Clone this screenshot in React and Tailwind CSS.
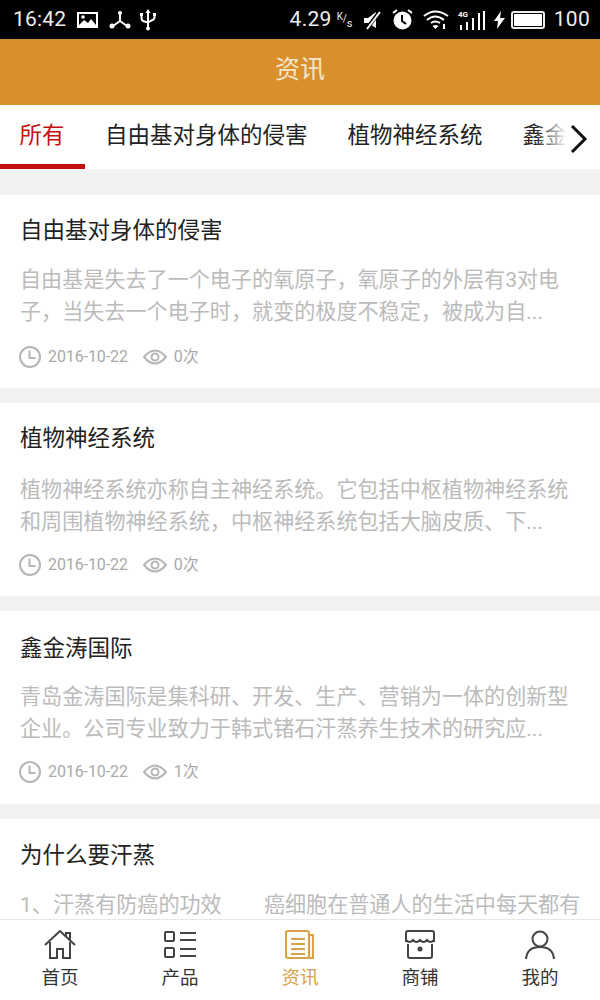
const cards = [
  { title: "自由基对身体的侵害", head: "h-[69px] pt-[17px]", meta: "h-[60px] pb-[2px]", l1: "自由基是失去了一个电子的氧原子，氧原子的外层有3对电", l2: "子，当失去一个电子时，就变的极度不稳定，被成为自...", v: "0次" },
  { title: "植物神经系统", head: "h-[71px] pt-[17px]", meta: "h-[58px] pb-[4px]", l1: "植物神经系统亦称自主神经系统。它包括中枢植物神经系统", l2: "和周围植物神经系统，中枢神经系统包括大脑皮质、下...", v: "0次" },
  { title: "鑫金涛国际", head: "h-[70px] pt-[19px]", meta: "h-[59px] pb-[5px]", l1: "青岛金涛国际是集科研、开发、生产、营销为一体的创新型", l2: "企业。公司专业致力于韩式锗石汗蒸养生技术的研究应...", v: "1次" },
];

function Status() {
  return (
    <div className="h-[39px] shrink-0 bg-black text-[#eeeeee] flex items-center pl-[13px] pr-[10px] text-[21px] font-[Roboto,sans-serif]">
      <span className="tracking-[0.2px]">16:42</span>
      <svg width="22" height="18" viewBox="0 0 22 18" className="ml-[11px]"><path fillRule="evenodd" fill="#fff" d="M0 1h21v16H0zM2 3v11l5-5 4 3 3-4 5 6V3z" /><circle cx="6" cy="6" r="1.8" fill="#fff" /></svg>
      <svg width="22" height="20" viewBox="0 0 22 20" className="ml-[10px]" fill="none" stroke="#fff" strokeWidth="2"><path d="M11 4v7M11 11l-7 5M11 11l7 5" /><circle cx="11" cy="3" r="2" fill="#fff" stroke="none" /><circle cx="3" cy="16" r="2.5" fill="#fff" stroke="none" /><circle cx="19" cy="16" r="2.5" fill="#fff" stroke="none" /></svg>
      <svg width="16" height="22" viewBox="0 0 16 22" className="ml-[9px]" fill="none" stroke="#fff" strokeWidth="2"><path d="M8 3v16M1.500 6v3q0 3 3 3.500l3.500 1 3.500-2q3-1 3-3V6" /><path d="M8 0l2.500 4h-5z" fill="#fff" stroke="none" /><circle cx="8" cy="19.500" r="2" fill="#fff" stroke="none" /><rect x="0" y="4" width="3" height="3" fill="#fff" stroke="none" /><rect x="13" y="4" width="3" height="3" fill="#fff" stroke="none" /></svg>
      <span className="ml-auto tracking-[0.3px]">4.29</span>
      <span className="ml-[5px] w-[18px] h-[18px] relative text-[10px] leading-none">
        <span className="absolute left-0 top-[1px]">K</span>
        <span className="absolute left-[6px] top-[3px]">/</span>
        <span className="absolute left-[10px] top-[7px] text-[11px]">s</span>
      </span>
      <svg width="20" height="20" viewBox="0 0 20 20" className="ml-[7px]"><path d="M2 8h4l8-6v16l-8-5H2z" fill="#fff" /><path d="M18 1L4 20" stroke="#000" strokeWidth="4" /><path d="M18 2L5 19" stroke="#fff" strokeWidth="2" /></svg>
      <svg width="21" height="21" viewBox="0 0 21 21" className="ml-[10px]"><circle cx="10.500" cy="11.500" r="9" fill="#fff" /><path d="M10 6v6l4 3" stroke="#000" strokeWidth="2" fill="none" /><path d="M1 4l4-3M20 4l-4-3" stroke="#fff" strokeWidth="2" /></svg>
      <svg width="26" height="20" viewBox="0 0 26 20" className="ml-[10px]" fill="none" stroke="#fff" strokeWidth="2"><path d="M1 6q11-9 24 0M4 10q8-7 17 0M8 13q4-3 9 0" /><path d="M12.500 19l-3-3q3-2 6 0z" fill="#fff" stroke="none" /><path d="M21 19v-5" /></svg>
      <svg width="27" height="22" viewBox="0 0 27 22" className="ml-[9px]"><text x="0" y="7.500" fontSize="8" fontWeight="700" fill="#fff" fontFamily="Roboto">4G</text><rect x="2" y="16" width="2" height="5" fill="#fff" /><rect x="8" y="13" width="2" height="8" fill="#fff" /><rect x="14" y="9" width="2" height="12" fill="#fff" /><rect x="20" y="4" width="2" height="17" fill="#fff" /><rect x="25" y="2" width="2" height="19" fill="#fff" /></svg>
      <svg width="11" height="18" viewBox="0 0 11 18" className="ml-[9px]"><path d="M7 0L0 10h4l-1 8 8-11H6z" fill="#fff" /></svg>
      <div className="ml-[6px] w-[34px] h-[18px] border-2 border-[#eeeeee] rounded-[3px] p-[1px]"><div className="w-full h-full bg-white" /></div>
      <span className="ml-[9px] tracking-[0.3px]">100</span>
    </div>
  );
}

function Clock() {
  return <svg width="24" height="24" viewBox="0 0 24 24" fill="none" stroke="#b5b5b5" strokeWidth="2"><circle cx="12" cy="12" r="10" /><path d="M11.500 5.500v7.500h6" /></svg>;
}
function Eye() {
  return <svg width="24" height="18" viewBox="0 0 24 18" fill="none" stroke="#b5b5b5" strokeWidth="2"><path d="M1 9q11-13 22 0q-11 13-22 0z" /><circle cx="12" cy="9" r="3.500" /></svg>;
}

function Card({ c, clip }) {
  return (
    <div className="bg-white pl-[20px] shrink-0">
      <div className={c.head + " text-[22.500px] leading-[36px] text-[#222222]"}>{c.title}</div>
      <div className="text-[21.100px] leading-[32px] text-[#bbbbbb] whitespace-nowrap">{c.l1}</div>
      {c.l2 && <div className="text-[21.100px] leading-[32px] text-[#bbbbbb] whitespace-nowrap">{c.l2}</div>}
      {!clip && (
        <div className={c.meta + " flex items-center text-[16px] text-[#aaaaaa] -ml-[2px]"}>
          <Clock />
          <span className="ml-[6px] tracking-[-0.1px] font-[Roboto]">2016-10-22</span>
          <span className="ml-[15px]"><Eye /></span>
          <span className="ml-[7px]">{c.v}</span>
        </div>
      )}
    </div>
  );
}

function Tab({ label, active, children }) {
  return (
    <div className={"flex-1 flex flex-col items-center pt-[9px] text-[18.500px] leading-[26px] " + (active ? "text-[#d3a252]" : "text-[#333333]")}>
      <div className="h-[31px] flex items-center">{children}</div>
      <div className="mt-[5px]">{label}</div>
    </div>
  );
}

export default function App() {
  return (
    <div className="w-[600px] h-[1000px] overflow-hidden flex flex-col bg-[#f2f2f2] font-['Roboto','Noto_Sans_CJK_SC',sans-serif]">
      <Status />
      <div className="h-[66px] shrink-0 bg-[#d98f2b] border-t border-[#c98a3a] flex items-center justify-center pb-[6px] text-[25px] text-[#f6e6cc]">资讯</div>
      <div className="relative h-[64px] shrink-0 bg-white flex items-start text-[22.500px] text-[#222222] whitespace-nowrap overflow-hidden">
        <div className="w-[85px] shrink-0 h-[64px] border-b-[5px] border-[#c40f0f] flex justify-center pt-[14px] pr-[1px] text-[#c40f0f]">所有</div>
        <div className="ml-[20px] shrink-0 pt-[14px]">自由基对身体的侵害</div>
        <div className="ml-[40px] shrink-0 pt-[14px]">植物神经系统</div>
        <div className="ml-[40px] shrink-0 pt-[14px]">鑫金涛国际</div>
        <div className="absolute left-[535px] top-0 w-[65px] h-[58px] bg-gradient-to-r from-transparent via-white to-white" />
        <svg width="18" height="30" viewBox="0 0 18 30" className="absolute left-[570px] top-[19px]" fill="none" stroke="#111111" strokeWidth="3"><path d="M2 2l13 13L2 28" /></svg>
      </div>
      <div className="flex-1 min-h-0 overflow-hidden flex flex-col gap-[15px] pt-[26px]">
        {cards.map((c) => <Card key={c.title} c={c} />)}
        <Card c={{ title: "为什么要汗蒸", head: "h-[70px] pt-[18px]", l1: "1、汗蒸有防癌的功效　　癌细胞在普通人的生活中每天都有" }} clip />
      </div>
      <div className="h-[81px] shrink-0 bg-white border-t border-[#e6e6e6] flex relative">
        <Tab label="首页">
          <svg width="32" height="30" viewBox="0 0 32 30" fill="none" stroke="#444444" strokeWidth="2"><path d="M1 15L16 1l15 14M6 12v16h7v-9h6v9h7V12M22 6V3h4v7" /></svg>
        </Tab>
        <Tab label="产品">
          <svg width="34" height="30" viewBox="0 0 34 30" fill="none" stroke="#444444" strokeWidth="2"><rect x="2" y="2" width="9" height="9" rx="1" /><rect x="2" y="18" width="9" height="9" rx="1" /><path d="M17 3h16M17 10h16M17 19h16M17 26h16" /></svg>
        </Tab>
        <Tab label="资讯" active>
          <svg width="30" height="30" viewBox="0 0 30 30" fill="none" stroke="#d9a04a" strokeWidth="2"><rect x="1" y="1" width="23" height="27" rx="2" /><path d="M24 5h4v23h-4M6 9h14M6 14h14M6 19h14M6 24h14" /></svg>
        </Tab>
        <Tab label="商铺">
          <svg width="30" height="30" viewBox="0 0 30 30" fill="none" stroke="#444444" strokeWidth="2"><path d="M1 12V3q0-2 2-2h24q2 0 2 2v9" /><path d="M1 10q3.500 4 7 0 3.500 4 7 0 3.500 4 7 0 3.500 4 7 0" /><path d="M3 14v12q0 2 2 2h20q2 0 2-2V14" /><circle cx="15" cy="19" r="2.500" fill="#444444" stroke="none" /></svg>
        </Tab>
        <Tab label="我的">
          <svg width="30" height="30" viewBox="0 0 30 30" fill="none" stroke="#444444" strokeWidth="2"><circle cx="15" cy="9" r="7.500" /><path d="M1 29q1-12 14-12t14 12" /></svg>
        </Tab>
      </div>
    </div>
  );
}
